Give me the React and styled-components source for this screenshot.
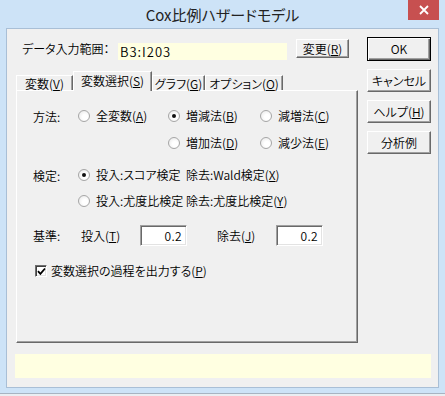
import React from "react";
import styled, { createGlobalStyle, css } from "styled-components";

const GlobalStyle = createGlobalStyle`
  html, body {
    margin: 0;
    padding: 0;
    background: #cde3f7;
  }
  body {
    font-family: "Noto Sans CJK JP", "Liberation Sans", sans-serif;
    font-size: 12px;
    font-weight: 350;
    color: #000;
    font-feature-settings: "palt";
  }
`;

function CoxDialog() {
  return (
    <Window>
      <GlobalStyle />
      <TitleBar>
        <span />
        <Title>Cox比例ハザードモデル</Title>
        <CloseButton>
          <svg width="10" height="10" viewBox="0 0 10 10">
            <path d="M1 1 L9 9 M9 1 L1 9" stroke="#fff" strokeWidth="1.8" />
          </svg>
        </CloseButton>
      </TitleBar>

      <Client>
        <Main>
          <LeftPane>
            <TopRow>
              <FieldLabel>データ入力範囲：</FieldLabel>
              <RangeField>B3:I203</RangeField>
              <Button $w={53} $h={19}>
                変更(<U>R</U>)
              </Button>
            </TopRow>

            <TabStrip>
              <Tab $w={57}>変数(<U>V</U>)</Tab>
              <Tab $w={79} $active>
                変数選択(<U>S</U>)
              </Tab>
              <Tab $w={53}>グラフ(<U>G</U>)</Tab>
              <Tab $w={78}>オプション(<U>O</U>)</Tab>
            </TabStrip>

            <Panel>
              <Row $top={15}>
                <RowLabel>方法:</RowLabel>
                <Cell $w={90}>
                  <Radio>
                    全変数(<U>A</U>)
                  </Radio>
                </Cell>
                <Cell $w={92}>
                  <Radio checked>
                    増減法(<U>B</U>)
                  </Radio>
                </Cell>
                <Cell>
                  <Radio>
                    減増法(<U>C</U>)
                  </Radio>
                </Cell>
              </Row>
              <Row $top={7}>
                <RowLabel />
                <Cell $w={90} />
                <Cell $w={92}>
                  <Radio>
                    増加法(<U>D</U>)
                  </Radio>
                </Cell>
                <Cell>
                  <Radio>
                    減少法(<U>E</U>)
                  </Radio>
                </Cell>
              </Row>

              <Row $top={12}>
                <RowLabel>検定:</RowLabel>
                <Radio checked>
                  投入:スコア検定&nbsp;&nbsp;除去:Wald検定(<U>X</U>)
                </Radio>
              </Row>
              <Row $top={6}>
                <RowLabel />
                <Radio>
                  投入:尤度比検定&nbsp;除去:尤度比検定(<U>Y</U>)
                </Radio>
              </Row>

              <Row $top={14} $h={21}>
                <RowLabel $w={48}>基準:</RowLabel>
                <Cell $w={59}>
                  投入(<U>T</U>)
                </Cell>
                <NumberBox>0.2</NumberBox>
                <Cell $w={59} $ml={30}>
                  除去(<U>J</U>)
                </Cell>
                <NumberBox>0.2</NumberBox>
              </Row>

              <Row $top={15} $pl={19}>
                <Checkbox>
                  <svg width="9" height="9" viewBox="0 0 9 9">
                    <path d="M1 4.2 L3.4 6.8 L8 1.5" fill="none" stroke="#000" strokeWidth="1.8" />
                  </svg>
                </Checkbox>
                <CheckText>
                  変数選択の過程を出力する(<U>P</U>)
                </CheckText>
              </Row>
            </Panel>
          </LeftPane>

          <RightPane>
            <Button $w={64} $h={24} $default>
              OK
            </Button>
            <Button $w={64} $h={23}>
              キャンセル
            </Button>
            <Button $w={64} $h={23}>
              ヘルプ(<U>H</U>)
            </Button>
            <Button $w={64} $h={23}>
              分析例
            </Button>
          </RightPane>
        </Main>

        <StatusBox />
      </Client>

      <TaskEdge />
    </Window>
  );
}

function Radio({ checked, children }) {
  return (
    <Option>
      <RadioDot $checked={checked} />
      <span>{children}</span>
    </Option>
  );
}

export default function App() {
  return <CoxDialog />;
}

const Window = styled.div`
  width: 445px;
  height: 396px;
  overflow: hidden;
  background: #cde3f7;
  display: flex;
  flex-direction: column;
`;

const TitleBar = styled.div`
  height: 28px;
  flex: none;
  display: grid;
  grid-template-columns: 1fr auto 1fr;
  align-items: start;
`;

const Title = styled.div`
  font-size: 15px;
  font-weight: 400;
  line-height: 15px;
  margin-top: 7px;
  color: #222;
  white-space: nowrap;
`;

const CloseButton = styled.div`
  justify-self: end;
  margin-right: 6px;
  width: 31px;
  height: 20px;
  background: #c75050;
  display: flex;
  align-items: center;
  justify-content: center;
`;

const Client = styled.div`
  margin-left: 6px;
  width: 433px;
  height: 360px;
  flex: none;
  box-sizing: border-box;
  border: 1px solid #a9bfd6;
  background: #f0f0f0;
  display: flex;
  flex-direction: column;
`;

const Main = styled.div`
  display: flex;
  align-items: flex-start;
`;

const LeftPane = styled.div`
  margin-left: 9px;
  width: 342px;
  display: flex;
  flex-direction: column;
`;

const RightPane = styled.div`
  margin-left: 9px;
  padding-top: 8px;
  display: flex;
  flex-direction: column;
  gap: 8px;
`;

const TopRow = styled.div`
  margin-top: 10px;
  height: 20px;
  display: flex;
  align-items: flex-start;
`;

const FieldLabel = styled.div`
  width: 96px;
  padding-left: 6px;
  margin-top: 3px;
  line-height: 14px;
  white-space: nowrap;
`;

const RangeField = styled.div`
  width: 169px;
  height: 17px;
  margin-top: 4px;
  margin-right: 9px;
  background: #ffffe1;
  line-height: 18px;
  padding-left: 2px;
  box-sizing: border-box;
  font-size: 13px;
  letter-spacing: 1px;
`;

const U = styled.span`
  text-decoration: underline;
  text-underline-offset: 1px;
`;

const Button = styled.button`
  width: ${(p) => p.$w}px;
  height: ${(p) => p.$h}px;
  padding: 0;
  box-sizing: border-box;
  font: inherit;
  font-size: 12px;
  line-height: 12px;
  color: #000;
  background: #f0f0f0;
  border: 1px solid;
  border-color: #fff #696969 #696969 #fff;
  box-shadow: inset -1px -1px #a0a0a0;
  white-space: nowrap;
  ${(p) =>
    p.$default &&
    css`
      border-color: #000;
      box-shadow: inset 1px 1px #fff, inset -1px -1px #696969,
        inset -2px -2px #a0a0a0;
    `}
`;

const TabStrip = styled.div`
  margin-top: 12px;
  height: 19px;
  display: flex;
  align-items: flex-end;
  position: relative;
  z-index: 1;
`;

const Tab = styled.div`
  width: ${(p) => p.$w}px;
  box-sizing: border-box;
  height: ${(p) => (p.$active ? 20 : 15)}px;
  margin-bottom: ${(p) => (p.$active ? -1 : 0)}px;
  background: #f0f0f0;
  border-top: 1px solid #fff;
  border-left: 1px solid #fff;
  border-right: 1px solid #696969;
  box-shadow: inset -1px 0 #a0a0a0;
  display: flex;
  justify-content: center;
  align-items: ${(p) => (p.$active ? "flex-start" : "center")};
  padding-top: ${(p) => (p.$active ? 2 : 0)}px;
  line-height: 13px;
  white-space: nowrap;
`;

const Panel = styled.div`
  width: 342px;
  height: 253px;
  box-sizing: border-box;
  border-top: 1px solid #fff;
  border-left: 1px solid #fff;
  border-right: 1px solid #696969;
  border-bottom: 1px solid #696969;
  box-shadow: inset -1px -1px #a0a0a0;
  display: flex;
  flex-direction: column;
`;

const Row = styled.div`
  margin-top: ${(p) => p.$top}px;
  height: ${(p) => p.$h || 20}px;
  padding-left: ${(p) => (p.$pl != null ? p.$pl - 1 : 16)}px;
  display: flex;
  align-items: center;
  white-space: nowrap;
`;

const RowLabel = styled.div`
  width: ${(p) => p.$w || 45}px;
  flex: none;
`;

const Cell = styled.div`
  width: ${(p) => (p.$w ? `${p.$w}px` : "auto")};
  margin-left: ${(p) => p.$ml || 0}px;
  flex: none;
  display: flex;
  align-items: center;
`;

const Option = styled.label`
  display: flex;
  align-items: center;
  gap: 6px;
  line-height: 14px;
`;

const RadioDot = styled.span`
  width: 12px;
  height: 12px;
  box-sizing: border-box;
  border-radius: 50%;
  border: 1px solid #a6a6a6;
  background: radial-gradient(circle at 60% 60%, #ffffff 30%, #e4e4e4 100%);
  display: flex;
  align-items: center;
  justify-content: center;
  &::after {
    content: "";
    width: 4px;
    height: 4px;
    border-radius: 50%;
    background: ${(p) => (p.$checked ? "#111" : "transparent")};
  }
`;

const NumberBox = styled.div`
  width: 47px;
  height: 21px;
  flex: none;
  box-sizing: border-box;
  background: #fff;
  border: 1px solid;
  border-color: #a0a0a0 #fff #fff #a0a0a0;
  box-shadow: inset 1px 1px #696969, inset -1px -1px #e3e3e3;
  text-align: right;
  padding-right: 4px;
  line-height: 19px;
  font-size: 12px;
  letter-spacing: 0.4px;
`;

const Checkbox = styled.span`
  width: 12px;
  height: 12px;
  box-sizing: border-box;
  background: #fff;
  border: 1px solid;
  border-color: #6d6d6d #fff #fff #6d6d6d;
  box-shadow: inset 1px 1px #404040, inset -1px -1px #e3e3e3;
  display: flex;
  align-items: center;
  justify-content: center;
`;

const CheckText = styled.span`
  margin-left: 4px;
  line-height: 14px;
`;

const StatusBox = styled.div`
  margin: 11px 0 0 8px;
  width: 416px;
  height: 24px;
  background: #ffffe1;
`;

const TaskEdge = styled.div`
  margin-top: 5px;
  height: 3px;
  border-top: 1px solid #a7b4c2;
  background: #eaeef2;
`;
